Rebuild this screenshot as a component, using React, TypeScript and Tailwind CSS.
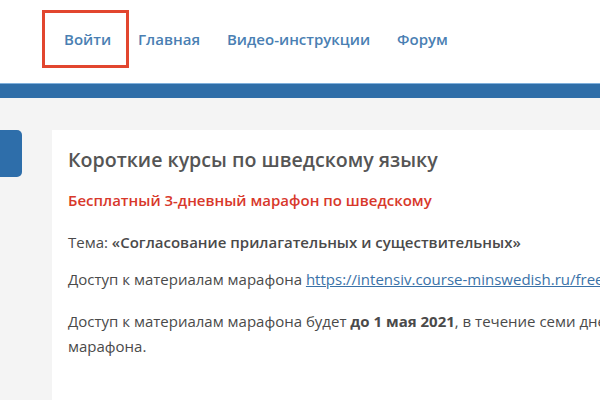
export default function App() {
  return (
    <div className="w-[600px] h-[400px] overflow-hidden bg-[#f4f4f4] font-['Open_Sans',sans-serif]">
      {/* Header */}
      <div className="h-[83px] bg-white flex items-start pl-[42px]">
        <nav className="flex items-center mt-[10px] text-[15px] font-semibold text-[#4a7fb3]">
          <div className="h-[58px] w-[87px] border-[3px] border-[#e2462f] flex items-center pl-[19px]">
            <a>Войти</a>
          </div>
          <div className="flex gap-[27px] ml-[9px]">
            <a>Главная</a>
            <a>Видео-инструкции</a>
            <a>Форум</a>
          </div>
        </nav>
      </div>
      <div className="h-[15px] bg-[#2f6ea8] border-t border-[#7fb0dc]" />

      {/* Body */}
      <div className="flex items-start pt-[32px] gap-[30px]">
        <div className="w-[22px] h-[47px] bg-[#2e6eaa] rounded-r-[5px] shrink-0" />
        <div className="bg-white w-[640px] h-[300px] shrink-0 pl-[16px] pt-[16px] text-[15px] text-[#4a4a4a] whitespace-nowrap">
          <h1 className="text-[19.6px] font-semibold text-[#555555] leading-[28px]">
            Короткие курсы по шведскому языку
          </h1>
          <p className="mt-[14px] font-semibold text-[#d8382b] leading-[25px]">
            Бесплатный 3-дневный марафон по шведскому
          </p>
          <p className="mt-[17px] leading-[25px]">
            Тема: <span className="font-semibold">«Согласование прилагательных и существительных»</span>
          </p>
          <p className="mt-[12px] leading-[25px]">
            Доступ к материалам марафона{' '}
            <a className="text-[#3a72a8] underline">https://intensiv.course-minswedish.ru/freemarathon</a>
          </p>
          <p className="mt-[17px] leading-[25px]">
            Доступ к материалам марафона будет <span className="font-bold">до 1 мая 2021</span>, в течение семи дней после окончания
            <br />
            марафона.
          </p>
        </div>
      </div>
    </div>
  )
}
